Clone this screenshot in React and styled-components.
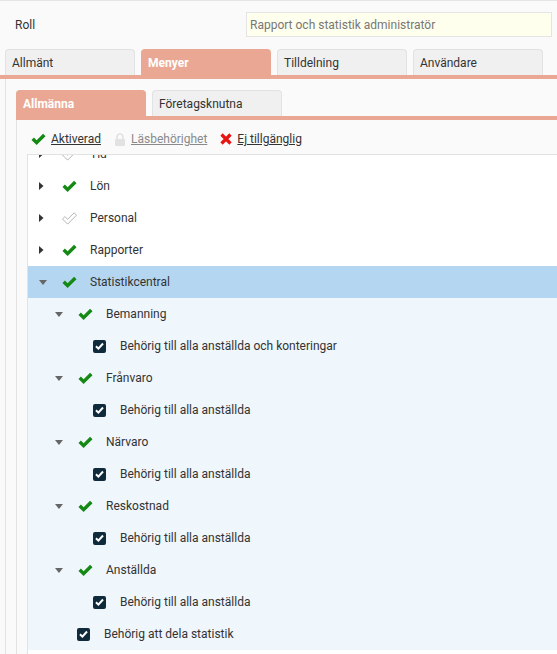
import React from "react";
import styled, { createGlobalStyle } from "styled-components";

const GlobalStyle = createGlobalStyle`
  html, body {
    margin: 0;
    padding: 0;
    background: #fafafa;
    font-family: Roboto, "Liberation Sans", sans-serif;
    color: #333;
  }
  * { box-sizing: border-box; }
`;

const salmon = "#eaa894";

const Page = styled.div`
  height: 654px;
  overflow: hidden;
  border-top: 1px solid #e4e4e4;
  display: flex;
  flex-direction: column;
`;

const RoleRow = styled.div`
  display: flex;
  align-items: center;
  height: 25px;
  margin-top: 11px;
  padding-left: 15px;
`;

const RoleLabel = styled.div`
  width: 231px;
  font-size: 12px;
`;

const RoleInput = styled.div`
  width: 306px;
  height: 25px;
  border: 1px solid #e4e4e4;
  background: #ffffee;
  color: #777;
  font-size: 12px;
  display: flex;
  align-items: center;
  padding-left: 3px;
`;

const TabBar = styled.div`
  display: flex;
  gap: 6px;
  margin-top: 12px;
  padding-left: ${p => p.indent}px;
  border-bottom: 4px solid ${salmon};
`;

const Tab = styled.div`
  width: 130px;
  height: 26px;
  border: 1px solid ${p => (p.active ? salmon : "#e2e2e2")};
  border-bottom: none;
  border-radius: 4px 4px 0 0;
  background: ${p => (p.active ? salmon : "#f0f0f0")};
  color: ${p => (p.active ? "#fff" : "#333")};
  font-weight: ${p => (p.active ? 700 : 400)};
  font-size: 12px;
  display: flex;
  align-items: center;
  padding-left: 6px;
`;

const OuterPanel = styled.div`
  flex: 1;
  margin-left: 5px;
  border-left: 1px solid #e2e2e2;
  padding: 11px 0 0 10px;
  display: flex;
  flex-direction: column;
  min-height: 0;

  ${TabBar} {
    margin-top: 0;
  }
`;

const InnerPanel = styled.div`
  flex: 1;
  border-left: 1px solid #e2e2e2;
  padding-left: 10px;
  display: flex;
  flex-direction: column;
  min-height: 0;
`;

const Legend = styled.div`
  height: 34px;
  flex: none;
  display: flex;
  align-items: center;
  padding: 4px 0 0 4px;
  font-size: 12px;
`;

const LegendItem = styled.span`
  display: inline-flex;
  align-items: center;
  gap: 5px;
  margin-right: 13px;
  color: ${p => (p.muted ? "#8a8a8a" : "#333")};
  text-decoration: underline;
`;

const TreeBox = styled.div`
  flex: 1;
  border-top: 1px solid #e2e2e2;
  border-left: 1px solid #e2e2e2;
  background: #fff;
  overflow: hidden;
  min-height: 0;
`;

const TreeList = styled.div`
  margin-top: -17px;
`;

const Group = styled.div`
  background: ${p => (p.open ? "#eff6fc" : "transparent")};
`;

const Row = styled.div`
  height: 32px;
  display: flex;
  align-items: center;
  padding-left: ${p => 8 + p.level * 16}px;
  background: ${p => (p.selected ? "#b4d6f0" : "transparent")};
  font-size: 12px;
  color: #333;
`;

const ToggleSlot = styled.span`
  width: ${p => (p.leaf ? 25 : 26)}px;
  flex: none;
  display: flex;
  align-items: center;
  padding-left: 3px;
`;

const IconSlot = styled.span`
  width: ${p => (p.leaf ? 27 : 28)}px;
  flex: none;
  display: flex;
  align-items: center;
`;

const Box = styled.span`
  width: 13px;
  height: 13px;
  border-radius: 2px;
  background: #0f2a3b;
  display: flex;
  align-items: center;
  justify-content: center;
`;

const Arrow = ({ open }) =>
  open ? (
    <svg width="8" height="5" viewBox="0 0 8 5">
      <path d="M0 0h8L4 5z" fill="#666" />
    </svg>
  ) : (
    <svg width="5" height="8" viewBox="0 0 5 8">
      <path d="M0 0v8l4.5-4z" fill="#333" />
    </svg>
  );

const checkPath = "M0.5 7 L3 4.5 L5.8 7.3 L12.5 0.6 L15 3.1 L5.8 12.3 Z";

const Check = ({ outline }) => (
  <svg width="15" height="13" viewBox="0 0 15.5 13">
    {outline ? (
      <path d={checkPath} fill="none" stroke="#aaa" strokeWidth="0.9" />
    ) : (
      <path d={checkPath} fill="#148a14" />
    )}
  </svg>
);

const Lock = () => (
  <svg width="12" height="13" viewBox="0 0 12 13">
    <path d="M3 6V4a3 3 0 0 1 6 0v2" fill="none" stroke="#e2e2e2" strokeWidth="1.6" />
    <rect x="1" y="6" width="10" height="7" rx="1" fill="#e2e2e2" />
  </svg>
);

const Cross = () => (
  <svg width="12" height="12" viewBox="0 0 12 12">
    <path d="M1.5 1.5l9 9M10.5 1.5l-9 9" stroke="#e81414" strokeWidth="3.2" />
  </svg>
);

const BoxTick = () => (
  <svg width="9" height="8" viewBox="0 0 9 8">
    <path d="M1 4.2l2.4 2.4L8 1.5" fill="none" stroke="#fff" strokeWidth="2" />
  </svg>
);

const Node = ({ level, label, open, outline, selected }) => (
  <Row level={level} selected={selected}>
    <ToggleSlot>
      <Arrow open={open} />
    </ToggleSlot>
    <IconSlot>
      <Check outline={outline} />
    </IconSlot>
    {label}
  </Row>
);

const Leaf = ({ level, label }) => (
  <Row level={level}>
    <ToggleSlot leaf />
    <IconSlot leaf>
      <Box>
        <BoxTick />
      </Box>
    </IconSlot>
    {label}
  </Row>
);

const all = "Behörig till alla anställda";

const children = [
  { label: "Bemanning", leaf: "Behörig till alla anställda och konteringar" },
  { label: "Frånvaro", leaf: all },
  { label: "Närvaro", leaf: all },
  { label: "Reskostnad", leaf: all },
  { label: "Anställda", leaf: all }
];

export default function App() {
  return (
    <>
      <GlobalStyle />
      <Page>
        <RoleRow>
          <RoleLabel>Roll</RoleLabel>
          <RoleInput>Rapport och statistik administratör</RoleInput>
        </RoleRow>
        <TabBar indent={5}>
          <Tab>Allmänt</Tab>
          <Tab active>Menyer</Tab>
          <Tab>Tilldelning</Tab>
          <Tab>Användare</Tab>
        </TabBar>
        <OuterPanel>
          <TabBar indent={0}>
            <Tab active>Allmänna</Tab>
            <Tab>Företagsknutna</Tab>
          </TabBar>
          <InnerPanel>
            <Legend>
              <LegendItem>
                <Check />
                Aktiverad
              </LegendItem>
              <LegendItem muted>
                <Lock />
                Läsbehörighet
              </LegendItem>
              <LegendItem>
                <Cross />
                Ej tillgänglig
              </LegendItem>
            </Legend>
            <TreeBox>
              <TreeList>
                <Node level={0} label="Tid" outline />
                <Node level={0} label="Lön" />
                <Node level={0} label="Personal" outline />
                <Node level={0} label="Rapporter" />
                <Node level={0} label="Statistikcentral" open selected />
                <Group open>
                  {children.map(c => (
                    <React.Fragment key={c.label}>
                      <Node level={1} label={c.label} open />
                      <Leaf level={2} label={c.leaf} />
                    </React.Fragment>
                  ))}
                  <Leaf level={1} label="Behörig att dela statistik" />
                </Group>
              </TreeList>
            </TreeBox>
          </InnerPanel>
        </OuterPanel>
      </Page>
    </>
  );
}
